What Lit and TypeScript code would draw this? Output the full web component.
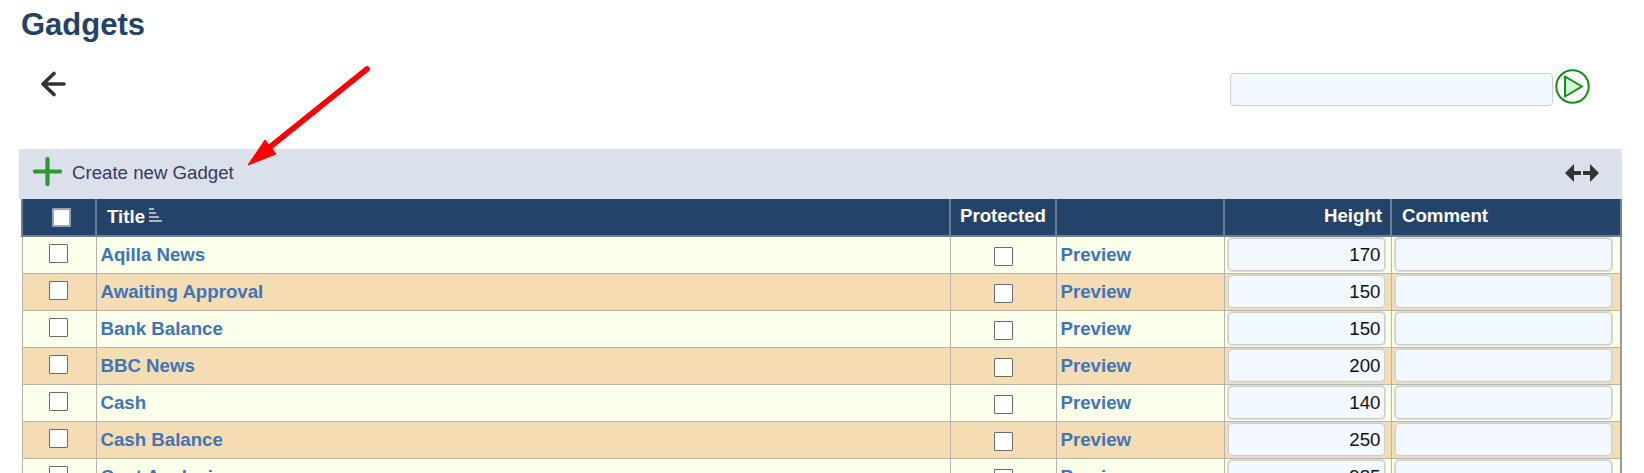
import { LitElement, html, css, svg } from "lit";
import { customElement } from "lit/decorators.js";

const rows: [string, string][] = [
  ["Aqilla News", "170"],
  ["Awaiting Approval", "150"],
  ["Bank Balance", "150"],
  ["BBC News", "200"],
  ["Cash", "140"],
  ["Cash Balance", "250"],
  ["Cost Analysis", "985"],
];

@customElement("app-root")
export class AppRoot extends LitElement {
  static styles = css`
    :host {
      display: block;
      position: relative;
      height: 473px;
      overflow: hidden;
      background: #fff;
      font-family: "Liberation Sans", Arial, sans-serif;
      color: #222;
    }
    h1 {
      margin: 0;
      padding: 8px 0 0 21px;
      height: 42px;
      box-sizing: border-box;
      font-size: 31px;
      line-height: 34px;
      font-weight: 700;
      color: #234368;
    }
    .top {
      display: flex;
      justify-content: space-between;
      height: 107px;
      box-sizing: border-box;
      padding: 29px 54px 0 40px;
    }
    .back { display: block; width: 26px; height: 26px; }
    .search { display: flex; align-items: flex-start; gap: 2px; margin-top: -2px; }
    .search input {
      width: 323px;
      height: 33px;
      margin-top: 4px;
    }
    .play { display: block; width: 35px; height: 35px; }
    input.text {
      box-sizing: border-box;
      border: 1px solid #ccc;
      border-radius: 4px;
      background: #f1f8fe;
      font: 18.67px "Liberation Sans", Arial, sans-serif;
      color: #111;
      padding: 0 3px 0 5px;
      outline: none;
      display: block;
    }
    .toolbar {
      margin-left: 19px;
      width: 1603px;
      height: 50px;
      background: #dbe1eb;
      display: flex;
      align-items: center;
      box-sizing: border-box;
      padding: 0 23px 4px 14px;
      font-size: 18.67px;
      color: #39395c;
    }
    .plus { width: 29px; height: 29px; margin: -1px 10px 0 0; display: block; }
    .label { flex: 1; margin-top: 2px; }
    .expand { width: 34px; height: 20px; display: block; margin-top: 2px; }
    table {
      margin-left: 21px;
      width: 1601px;
      table-layout: fixed;
      border-collapse: collapse;
      border-right: 2px solid #999;
    }
    th {
      background: #234368;
      color: #fff;
      height: 37px;
      box-sizing: border-box;
      padding: 0 8px 3px 10px;
      font-size: 18.67px;
      font-weight: 700;
      text-align: left;
      border: 2px solid #6e7f94;
      border-top: 0;
    }
    th.center { text-align: center; padding-left: 0; padding-right: 0; }
    th.right { text-align: right; }
    th.title { padding-bottom: 0; }
    th.check { padding: 0; }
    td {
      height: 37px;
      box-sizing: border-box;
      padding: 0;
      border: 1px solid #b8b4aa;
      font-size: 18.67px;
      font-weight: 700;
    }
    tr.odd td { background: #f9ffe8; }
    tr.even td { background: #f5dcb3; }
    td a { color: #3f75b8; text-decoration: none; margin-left: 4px; }
    .sort { width: 14px; height: 14px; margin-left: 4px; vertical-align: 1px; }
    .box {
      display: block;
      box-sizing: border-box;
      width: 19px;
      height: 19px;
      background: #fff;
      border: 1px solid #6b6b6b;
      border-radius: 1px;
    }
    .first .box { margin: 0 0 3px 26px; }
    .prot .box { margin: 3px auto 0; }
    th .box { margin: 0 0 0 29px; border: 2px solid #98a3b1; }
    td input.text { height: 33px; margin: 0 0 0 3px; box-shadow: 0 0 0 1px #e0ddd5; }
    .h input.text { width: 157px; text-align: right; }
    .c input.text { width: 217px; }
    .arrow {
      position: absolute;
      left: 240px;
      top: 60px;
      width: 140px;
      height: 110px;
      pointer-events: none;
    }
  `;

  render() {
    return html`
      <h1>Gadgets</h1>
      <div class="top">
        <svg class="back" viewBox="0 0 26 26" fill="none" stroke="#333" stroke-width="3.6" stroke-linecap="round" stroke-linejoin="round">
          <path d="M3 13 H24 M14 2.5 L3 13 L14 23.5" />
        </svg>
        <div class="search">
          <input class="text" type="text" aria-label="Search" />
          <svg class="play" viewBox="0 0 35 35">
            <circle cx="17.5" cy="17.5" r="16.2" fill="#fff" stroke="#0f8f0f" stroke-width="2" />
            <path d="M10 7.5 L27 17.5 L10 27.5 Z" fill="#d4f9d4" stroke="#0f8f0f" stroke-width="2" stroke-linejoin="round" />
          </svg>
        </div>
      </div>
      <div class="toolbar">
        <svg class="plus" viewBox="0 0 29 29" stroke="#2c9a33" stroke-width="4.2" stroke-linecap="round">
          <path d="M14.5 2 V27 M2 14.5 H27" />
        </svg>
        <span class="label">Create new Gadget</span>
        <svg class="expand" viewBox="0 0 34 20" fill="#333">
          <path d="M0 10 L9 1 V8 H16 V12 H9 V19 Z" />
          <path d="M34 10 L25 1 V8 H18 V12 H25 V19 Z" />
        </svg>
      </div>
      <table>
        <colgroup>
          <col style="width:74px" />
          <col style="width:854px" />
          <col style="width:106px" />
          <col style="width:168px" />
          <col style="width:167px" />
          <col />
        </colgroup>
        <thead>
          <tr>
            <th class="check"><span class="box"></span></th>
            <th class="title">Title<svg class="sort" viewBox="0 0 14 14" fill="#a9b4c2">${svg`
              <rect x="0" y="0" width="5" height="2"/><rect x="0" y="4" width="7" height="2"/>
              <rect x="0" y="8" width="10" height="2"/><rect x="0" y="12" width="13" height="2"/>`}</svg></th>
            <th class="center">Protected</th>
            <th></th>
            <th class="right">Height</th>
            <th>Comment</th>
          </tr>
        </thead>
        <tbody>
          ${rows.map(
            ([title, height], i) => html`
              <tr class=${i % 2 ? "even" : "odd"}>
                <td class="first"><span class="box"></span></td>
                <td><a href="#">${title}</a></td>
                <td class="prot"><span class="box"></span></td>
                <td><a href="#">Preview</a></td>
                <td class="h"><input class="text" type="text" .value=${height} aria-label="Height" /></td>
                <td class="c"><input class="text" type="text" aria-label="Comment" /></td>
              </tr>
            `
          )}
        </tbody>
      </table>
      <svg class="arrow" viewBox="0 0 140 110">
        <path d="M127 9 L30 87" stroke="#ff0000" stroke-width="5.6" stroke-linecap="round" fill="none" />
        <path d="M8 105 L25 80 L36 94 Z" fill="#ff0000" stroke="#ff0000" stroke-width="1" stroke-linejoin="round" />
      </svg>
    `;
  }
}
